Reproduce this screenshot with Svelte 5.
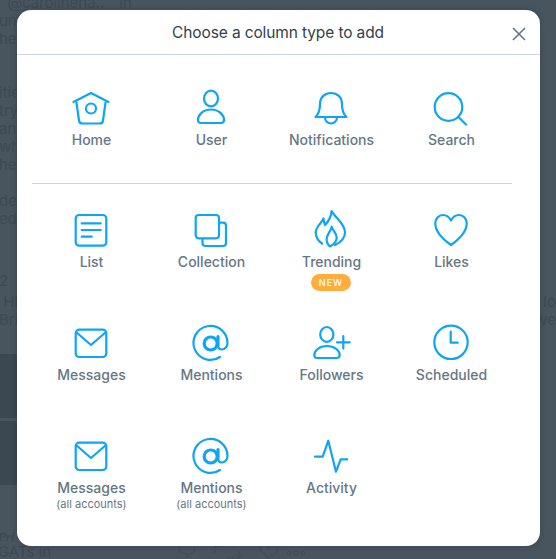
<script lang="ts">
  // fond : bribes du fil de tweets, assombries derrière la modale
  const feedTop = [
    { l: '  @carolineha..   1h', r: '', gap: 0 },
    { l: 'unt', r: '', gap: 0 },
    { l: 'her', r: '', gap: 0 },
    { l: 'itie', r: '', gap: 36 },
    { l: 'try', r: '', gap: 0 },
    { l: 'an', r: '', gap: 0 },
    { l: 'wh', r: '', gap: 0 },
    { l: 'he c', r: '', gap: 0 },
    { l: 'de/', r: '', gap: 18 },
    { l: 'ed', r: '', gap: 0 },
    { l: '2', r: '', gap: 44 },
    { l: ' HI', r: 'lo', gap: 3 },
    { l: 'Brir', r: 'we', gap: 0 }
  ];

  const primary = [
    { id: 'home', label: 'Home' },
    { id: 'user', label: 'User' },
    { id: 'bell', label: 'Notifications' },
    { id: 'search', label: 'Search' }
  ];
  const others = [
    { id: 'list', label: 'List' },
    { id: 'collection', label: 'Collection' },
    { id: 'flame', label: 'Trending', badge: 'NEW' },
    { id: 'heart', label: 'Likes' },
    { id: 'mail', label: 'Messages' },
    { id: 'at', label: 'Mentions' },
    { id: 'follow', label: 'Followers' },
    { id: 'clock', label: 'Scheduled' },
    { id: 'mail', label: 'Messages', sub: '(all accounts)' },
    { id: 'at', label: 'Mentions', sub: '(all accounts)' },
    { id: 'activity', label: 'Activity' }
  ];
</script>

{#snippet icon(id: string)}
  <svg class="ico" viewBox="0 0 40 36" aria-hidden="true">
    {#if id === 'home'}
      <path d="M2.500 12 20 3l17.500 9" />
      <path d="M5.500 12.500 8 30.500q.4 3 3.400 3h17.200q3 0 3.400-3l2.500-18" />
      <circle cx="20" cy="18.500" r="5" />
    {:else if id === 'user'}
      <ellipse cx="20" cy="8.500" rx="7" ry="7.800" />
      <path d="M20 19.500C12 19.500 7 25 7 30q0 3 3 3h20q3 0 3-3c0-5-5-10.500-13-10.500Z" />
    {:else if id === 'bell'}
      <path d="M4.500 27C8 24 9 20 9 14 9 7 14 3 20 3s11 4 11 11c0 6 1 10 4.500 13Z" />
      <path d="M14 27.500a6 6 0 0 0 12 0" />
    {:else if id === 'search'}
      <circle cx="17.500" cy="17" r="13.800" />
      <path d="M27.500 27l7.500 7.500" />
    {:else if id === 'list'}
      <rect x="4.700" y="3" width="30.600" height="30.700" rx="3.500" />
      <path d="M10.700 11.300h19M10.700 18h19M10.700 24.700h10" />
    {:else if id === 'collection'}
      <rect x="4.700" y="3" width="23.300" height="23.300" rx="3" />
      <path d="M29 10.700h3a3 3 0 0 1 3 3V31a3 3 0 0 1-3 3H14.500a3 3 0 0 1-3-3v-3.700" />
    {:else if id === 'flame'}
      <path d="M11 31.500C6 28 4.700 24 4.700 20.500 4.700 15 10 12 12.500 6.500 13 9.500 13 11 14 13 17 10 20 5 20.700-1 23 5 34 11 34 20.500 34 26 29 30.500 24 33" />
      <path d="M19 34.500C16 32 15.500 29 15.700 26.500 16 22 19.500 20 20.700 14.700 22 19 25.700 21 25.700 25.500 25.700 29 23 32.500 19 34.500Z" />
    {:else if id === 'heart'}
      <path d="M20 8.500C18 4.500 15 3 12 3 7.500 3 4.300 7 4.300 11.500 4.300 20 13 28 20 33 27 28 35.700 20 35.700 11.500 35.700 7 32.500 3 28 3 25 3 22 4.500 20 8.500Z" />
    {:else if id === 'mail'}
      <rect x="4.700" y="4.700" width="30.600" height="27.300" rx="3.500" />
      <path d="M5 7l15 13L35 7" />
    {:else if id === 'at'}
      <circle cx="19.700" cy="18.500" r="6.500" class="bold" />
      <path class="bold" d="M27 11.500V20" />
      <path d="M27 20c0 3 1.500 4.500 4 4.500 3 0 5.500-3 5.500-6.500A17 17 0 1 0 29 32" />
    {:else if id === 'follow'}
      <ellipse cx="15.800" cy="9.400" rx="6.600" ry="7.400" />
      <path d="M15.800 21C8 21 3.300 26 3.300 30q0 3 2.700 3h19.700q3 0 3-3c0-4-4.700-9-12.900-9Z" />
      <path d="M26 17.300h12.700M32.300 11v12.600" />
    {:else if id === 'clock'}
      <circle cx="20" cy="17.300" r="16.700" />
      <path d="M19.700 6.700v11h7" />
    {:else if id === 'activity'}
      <path d="M4 18.700h7.700l5.600-16L25 33.700l4.700-12.400h6.600" />
    {/if}
  </svg>
{/snippet}

{#snippet column(item: any)}
  <button class="col" type="button">
    {@render icon(item.id)}
    <span class="label">{item.label}</span>
    {#if item.sub}<span class="sub">{item.sub}</span>{/if}
    {#if item.badge}<span class="badge">{item.badge}</span>{/if}
  </button>
{/snippet}

<div class="feed" aria-hidden="true">
  {#each feedTop as line}
    <div class="feed__line" style="margin-top:{line.gap}px">
      <span>{line.l}</span><span>{line.r}</span>
    </div>
  {/each}
  <div class="feed__media"></div>
  <div class="feed__media feed__media--low"></div>
  <div class="feed__foot">
    <span class="feed__name">Pri</span>
    <div class="feed__row">
      <span>GATs in</span>
      <svg class="feed__acts" viewBox="0 0 130 14">
        <path d="M0 4q0-4 5-4h6q5 0 5 4t-5 5l-3 4v-4q-8 0-8-5Z" />
        <path d="M36 8V1h12M60 6v7H48M32 5l4-4 4 4M56 9l4 4 4-4" />
        <path d="M90 13c-6-4-9-7-9-10q0-3 3-3 4 0 6 3 2-3 6-3 3 0 3 3c0 3-3 6-9 10Z" />
        <circle cx="110" cy="8" r="2" /><circle cx="117" cy="8" r="2" /><circle cx="124" cy="8" r="2" />
      </svg>
    </div>
  </div>
</div>

<div class="dialog" role="dialog">
  <header class="head">
    <h1>Choose a column type to add</h1>
    <button class="close" type="button" aria-label="Close">
      <svg viewBox="0 0 14 14"><path d="M1 1l12 12M13 1 1 13" /></svg>
    </button>
  </header>
  <div class="grid grid--top">
    {#each primary as item}{@render column(item)}{/each}
  </div>
  <hr />
  <div class="grid grid--rest">
    {#each others as item}{@render column(item)}{/each}
  </div>
</div>

<style>
  :global(body) {
    margin: 0;
    background: #48555f;
    overflow: hidden;
  }
  .feed {
    height: 566px;
    overflow: hidden;
    background: #48555f;
    color: #3d4953;
    font: 15px/18px Inter, "Liberation Sans", sans-serif;
    padding-top: 1px;
    box-sizing: border-box;
    margin-top: -7px;
  }
  .feed__line {
    display: flex;
    justify-content: space-between;
    white-space: pre;
    margin-left: -1px;
  }
  .feed__media {
    width: 200px;
    height: 64px;
    margin-top: 25px;
    background: #3b4751;
  }
  .feed__media--low {
    margin-top: 3px;
  }
  .feed__foot {
    margin: 45px 0 0 -2px;
    line-height: 16px;
  }
  .feed__name {
    display: block;
    font: italic bold 13px/14px "Liberation Serif", serif;
  }
  .feed__row {
    display: flex;
    gap: 128px;
  }
  .feed__acts {
    width: 130px;
    height: 14px;
    margin-top: 1px;
    fill: none;
    stroke: #3f4b55;
  }

  .dialog {
    position: absolute;
    left: 17px;
    top: 10px;
    width: 523px;
    height: 536px;
    background: #fff;
    border-radius: 14px;
    box-shadow: 0 0 6px rgba(30, 40, 50, 0.35);
    font-family: Inter, "Liberation Sans", sans-serif;
  }
  .head {
    position: relative;
    display: flex;
    align-items: center;
    justify-content: center;
    height: 44px;
    border-bottom: 1px solid #ccd6dd;
  }
  h1 {
    margin: 0 0 0 -1px;
    font-size: 15.5px;
    letter-spacing: -0.12px;
    font-weight: 400;
    color: #333f4b;
  }
  .close {
    position: absolute;
    right: 14px;
    top: 17px;
    width: 14px;
    height: 14px;
    padding: 0;
    border: 0;
    background: none;
  }
  .close svg {
    display: block;
    fill: none;
    stroke: #657786;
    stroke-width: 1.6;
  }
  .grid {
    display: grid;
    grid-template-columns: repeat(4, 120px);
    margin-left: 14px;
  }
  .grid--top {
    padding: 35px 0 33px;
  }
  .grid--rest {
    padding-top: 28px;
    grid-auto-rows: 93px;
    row-gap: 20px;
  }
  hr {
    margin: 0 28px 0 15px;
    border: 0;
    border-top: 1px solid #ccd6dd;
  }
  .col {
    display: flex;
    flex-direction: column;
    align-items: center;
    padding: 0;
    border: 0;
    background: none;
    font-family: inherit;
  }
  .ico {
    width: 40px;
    height: 36px;
    overflow: visible;
    fill: none;
    stroke: #0ea5f5;
    stroke-width: 2.2;
    stroke-linejoin: round;
    stroke-linecap: round;
  }
  .ico .bold {
    stroke-width: 3.2;
  }
  .label {
    margin-top: 4px;
    padding-left: 1px;
    font-size: 14px;
    line-height: 20px;
    font-weight: 500;
    color: #657786;
  }
  .sub {
    padding-left: 1px;
    font-size: 11px;
    line-height: 13px;
    color: #657786;
  }
  .badge {
    margin-top: 2px;
    padding: 0 7.500px;
    height: 17px;
    line-height: 17px;
    border-radius: 9px;
    background: #ffad3c;
    color: #fff;
    font-size: 9px;
    font-weight: 500;
    letter-spacing: 1px;
  }
</style>
